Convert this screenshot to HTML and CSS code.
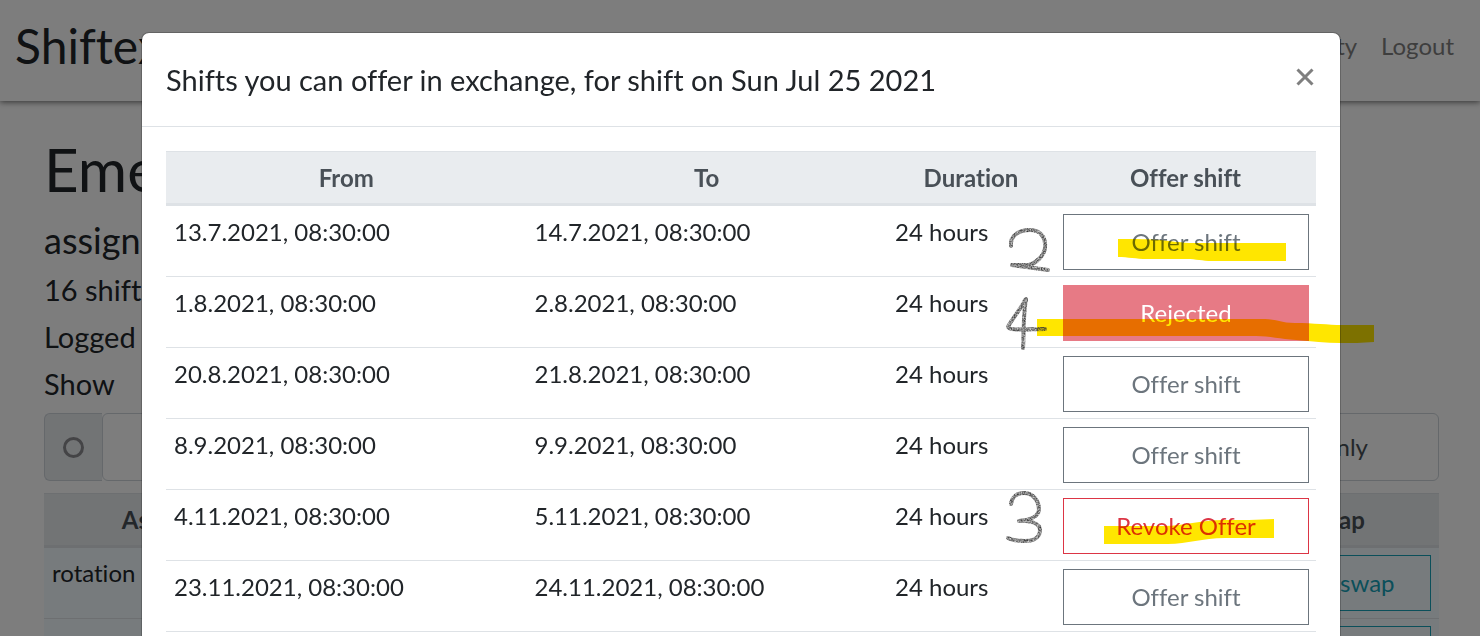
FILE: index.html
```html
<!DOCTYPE html>
<html lang="en">
<head>
<meta charset="utf-8">
<meta name="viewport" content="width=device-width, initial-scale=1">
<title>Shiftex</title>
<link rel="stylesheet" href="styles.css">
</head>
<body>
<div class="page">
  <header class="navbar">
    <a class="brand" href="#">Shiftex</a>
    <nav class="nav">
      <a class="nav-link" href="#">Facility</a>
      <a class="nav-link" href="#">Logout</a>
    </nav>
  </header>
  <main class="content">
    <h1 class="page-title">Eme</h1>
    <h2 class="page-subtitle">assign</h2>
    <p class="info">16 shifts</p>
    <p class="info">Logged</p>
    <p class="info">Show</p>
    <div class="input-group">
      <span class="input-addon"><input class="radio" type="radio" id="only" name="show"></span>
      <label class="input-label" for="only">Only</label>
    </div>
    <table class="table shifts">
      <colgroup><col class="col-assignment"><col><col class="col-swap"></colgroup>
      <thead><tr><th>Assignment</th><th></th><th>Swap</th></tr></thead>
      <tbody>
        <tr><td>rotation</td><td></td><td><button class="btn btn-info" type="button">Offer swap</button></td></tr>
        <tr><td></td><td></td><td><button class="btn btn-info" type="button" aria-label="Offer swap"></button></td></tr>
      </tbody>
    </table>
  </main>
</div>

<div class="backdrop">
  <section class="modal" role="dialog" aria-modal="true" aria-labelledby="modal-title">
    <header class="modal-header">
      <h2 class="modal-title" id="modal-title">Shifts you can offer in exchange, for shift on Sun Jul 25 2021</h2>
      <button class="close" type="button" aria-label="Close">
        <svg class="close-icon" viewBox="0 0 18 18" aria-hidden="true"><path d="M1.5 1.5 16.5 16.5M16.5 1.5 1.5 16.5"/></svg>
      </button>
    </header>
    <div class="modal-body">
      <table class="table offers">
        <colgroup><col><col><col class="col-duration"><col class="col-offer"></colgroup>
        <thead><tr><th>From</th><th>To</th><th>Duration</th><th>Offer shift</th></tr></thead>
        <tbody>
          <tr><td>13.7.2021, 08:30:00</td><td>14.7.2021, 08:30:00</td><td>24 hours</td><td><button class="btn btn-secondary" type="button">Offer shift</button></td></tr>
          <tr><td>1.8.2021, 08:30:00</td><td>2.8.2021, 08:30:00</td><td>24 hours</td><td><button class="btn btn-rejected" type="button" disabled>Rejected</button></td></tr>
          <tr><td>20.8.2021, 08:30:00</td><td>21.8.2021, 08:30:00</td><td>24 hours</td><td><button class="btn btn-secondary" type="button">Offer shift</button></td></tr>
          <tr><td>8.9.2021, 08:30:00</td><td>9.9.2021, 08:30:00</td><td>24 hours</td><td><button class="btn btn-secondary" type="button">Offer shift</button></td></tr>
          <tr><td>4.11.2021, 08:30:00</td><td>5.11.2021, 08:30:00</td><td>24 hours</td><td><button class="btn btn-danger" type="button">Revoke Offer</button></td></tr>
          <tr><td>23.11.2021, 08:30:00</td><td>24.11.2021, 08:30:00</td><td>24 hours</td><td><button class="btn btn-secondary" type="button">Offer shift</button></td></tr>
        </tbody>
      </table>
    </div>
  </section>
</div>

<svg class="marks highlighter" viewBox="0 0 1480 636" aria-hidden="true">
  <path d="M1118 239C1136 239 1150 239 1161 240C1172 241 1181 243 1194 243H1286V261H1212C1202 261 1196 259 1187 259H1147C1136 259 1128 257 1118 257Z"/>
  <path d="M1037 319H1265C1276 319 1282 323 1295 323C1314 323 1328 325 1342 325H1374V342C1362 343 1352 343 1340 343C1326 343 1312 341 1296 340C1280 339 1270 336 1256 336H1037Z"/>
  <path d="M1104 526H1164C1184 526 1200 520 1223 520C1240 520 1258 520 1274 519V538H1225C1202 538 1188 544 1168 544H1104Z"/>
</svg>
<svg class="marks pencil" viewBox="0 0 1480 636" aria-hidden="true">
  <filter id="grain" x="-20%" y="-20%" width="140%" height="140%">
    <feTurbulence type="fractalNoise" baseFrequency="0.7" numOctaves="2" seed="4"/>
    <feColorMatrix values="0 0 0 0 0  0 0 0 0 0  0 0 0 0 0  0 0 0 1.2 0"/>
    <feComposite in="SourceGraphic" operator="in"/>
    <feGaussianBlur stdDeviation="0.6"/>
  </filter>
  <g filter="url(#grain)">
    <path d="M1011 246C1010 236 1018 230 1030 230C1041 230 1046 238 1045 248C1044 256 1036 263 1029 265L1012 265L1048 270M1012 265L1027 267"/>
    <path d="M1025 300C1021 309 1009 323 1008 327C1009 331 1030 329 1045 329M1026 299C1023 315 1024 332 1023 348"/>
    <path d="M1011 504C1012 496 1018 493 1024 493C1033 493 1039 501 1039 510C1038 517 1030 520 1019 521C1029 520 1040 523 1040 530C1040 537 1034 541 1025 541C1018 541 1012 540 1008 538"/>
  </g>
</svg>
</body>
</html>
```

FILE: styles.css
```css
* { box-sizing: border-box; }

body {
  margin: 0;
  height: 100vh;
  overflow: hidden;
  font-family: Lato, "Liberation Sans", sans-serif;
  font-size: 24px;
  font-variant-ligatures: none;
  line-height: 36px;
  color: #212529;
  background: #fff;
}

.page { height: 100vh; overflow: hidden; }

.navbar {
  display: flex;
  align-items: center;
  justify-content: space-between;
  padding: 10px 26px 19px 15px;
  box-shadow: 0 1px 6px rgba(0, 0, 0, 0.6);
}
.brand { font-size: 48px; line-height: 72px; color: #212529; text-decoration: none; }
.nav { display: flex; gap: 24px; }
.nav-link { color: #7f7f7f; text-decoration: none; }

.content { padding: 32px 41px 0 44px; }
.page-title { margin: 0 0 14px; font-size: 60px; font-weight: 400; line-height: 72px; }
.page-subtitle { margin: 0 0 4px; font-size: 36px; font-weight: 400; line-height: 43px; }
.info { margin: 0; font-size: 29px; line-height: 47px; }

.input-group { display: flex; margin: 6px 0 12px; }
.input-addon {
  display: flex;
  align-items: center;
  justify-content: center;
  width: 58px;
  background: #e9ecef;
  border: 1px solid #ced4da;
  border-right: 0;
  border-radius: 6px 0 0 6px;
}
.radio {
  appearance: none;
  width: 21px;
  height: 21px;
  margin: 0;
  border: 3px solid #8b8b90;
  border-radius: 50%;
}
.input-label {
  flex: 1;
  padding: 15px 70px;
  text-align: right;
  color: #495057;
  border: 1px solid #ced4da;
  border-radius: 6px;
}

.table { width: 100%; table-layout: fixed; border-collapse: separate; border-spacing: 0; }
.table th {
  padding: 8px 8px 7px;
  color: #495057;
  background: #e9ecef;
  border-top: 1px solid #dee2e6;
  border-bottom: 3px solid #dee2e6;
}
.table td { padding: 8px 7px 6px 8px; vertical-align: top; border-bottom: 1px solid #dee2e6; }
.shifts td { padding: 7px 8px; background: #f3faff; }
.col-assignment { width: 281px; }
.col-swap { width: 206px; }
.col-duration { width: 168px; }
.col-offer { width: 261px; }

.btn {
  display: block;
  width: 100%;
  min-height: 56px;
  padding: 9px 12px;
  font: inherit;
  font-variant-ligatures: none;
  background: transparent;
  border: 1px solid;
}
.btn-secondary { color: #6c757d; }
.btn-danger { color: #dc3545; }
.btn-info { color: #17a2b8; }
.btn-rejected { color: #fff; background: #e77a85; border-color: #e77a85; }

.backdrop {
  position: fixed;
  inset: 0;
  padding: 32px 12px;
  overflow: hidden;
  background: rgba(0, 0, 0, 0.51);
}
.modal {
  max-width: 1200px;
  margin: 0 auto;
  transform: translateX(1px);
  background: #fff;
  background-clip: padding-box;
  border: 1px solid rgba(0, 0, 0, 0.2);
  border-radius: 8px;
}
.modal-header {
  display: flex;
  align-items: flex-start;
  justify-content: space-between;
  padding: 24px;
  border-bottom: 1px solid #dee2e6;
}
.modal-title { margin: 0; font-size: 29px; font-weight: 400; line-height: 45px; }
.close { display: flex; padding: 11px 2px; background: none; border: 0; }
.close-icon { width: 18px; height: 18px; fill: none; stroke: #7f7f7f; stroke-width: 3; }
.modal-body { padding: 24px; }

/* Hand-drawn review marks lying over the page */
.marks {
  position: fixed;
  top: 0;
  left: calc(50% - 740px);
  width: 1480px;
  height: 636px;
  pointer-events: none;
}
.highlighter { fill: #ffe600; mix-blend-mode: multiply; }
.pencil { fill: none; stroke: #333; stroke-width: 4; stroke-linecap: round; stroke-linejoin: round; }
```
